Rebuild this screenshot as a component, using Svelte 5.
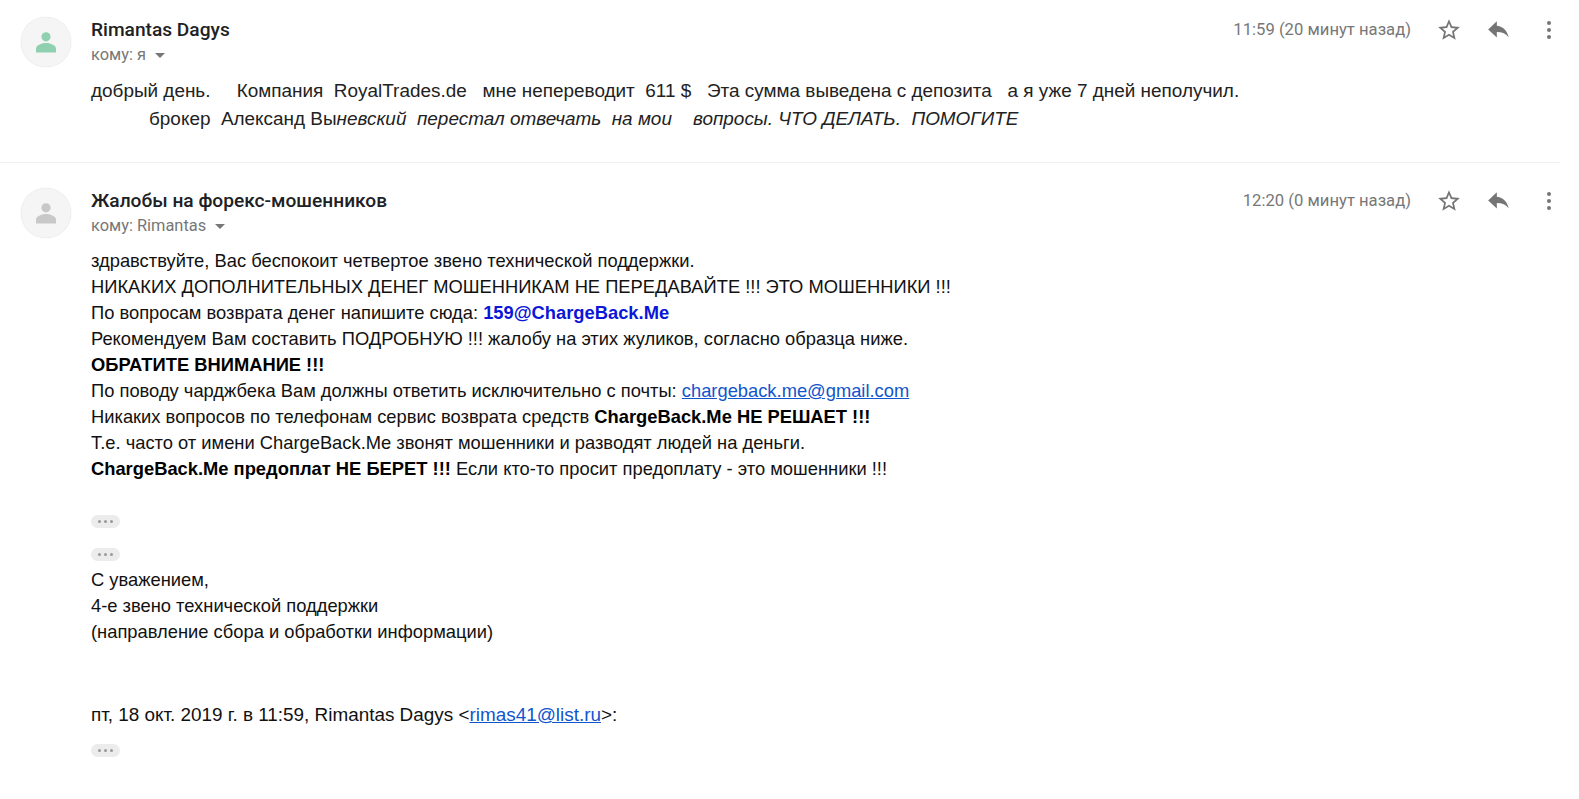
<script>
  let messages = [
    { from: 'Rimantas Dagys', to: 'кому: я', time: '11:59 (20 минут назад)', avatar: '#8fd0b0' },
    { from: 'Жалобы на форекс-мошенников', to: 'кому: Rimantas', time: '12:20 (0 минут назад)', avatar: '#c8c8c8' }
  ];
</script>

{#snippet head(m)}
  <div class="avatar">
    <svg width="24" height="24" viewBox="0 0 24 24" fill={m.avatar}>
      <circle cx="12" cy="6.800" r="4.600" />
      <path d="M2 22.500v-4c0-3.600 6.600-5.500 10-5.500s10 1.900 10 5.500v4z" />
    </svg>
  </div>
  <div class="who">
    <div class="from">{m.from}</div>
    <div class="to">{m.to}<span class="caret"></span></div>
  </div>
  <div class="time">{m.time}</div>
  <div class="icons">
    <svg class="star" width="26" height="26" viewBox="0 0 24 24" fill="#757575">
      <path d="M22 9.240l-7.190-.62L12 2 9.190 8.630 2 9.240l5.460 4.730L5.820 21 12 17.270 18.180 21l-1.630-7.030L22 9.240zM12 15.400l-3.760 2.270 1-4.280-3.320-2.880 4.380-.38L12 6.100l1.710 4.040 4.380.38-3.320 2.880 1 4.280L12 15.400z" />
    </svg>
    <svg class="reply" width="26" height="26" viewBox="0 0 24 24" fill="#757575">
      <path d="M10 9V4l-8 7.500 8 7.500v-5.100c5 0 8.500 1.600 11 5.100-1-5-4-10-11-11z" />
    </svg>
    <svg class="more" width="6" height="20" viewBox="0 0 6 20" fill="#757575">
      <circle cx="3" cy="3" r="2" /><circle cx="3" cy="10" r="2" /><circle cx="3" cy="17" r="2" />
    </svg>
  </div>
{/snippet}

<main>
  <section class="msg first">
    <header>{@render head(messages[0])}</header>
    <div class="body short">
      <div>добрый день.&nbsp; &nbsp; &nbsp;Компания&nbsp; RoyalTrades.de&nbsp; &nbsp;мне непереводит&nbsp; 611 $&nbsp; &nbsp;Эта сумма выведена с депозита&nbsp; &nbsp;а я уже 7 дней неполучил.</div>
      <div class="indent">брокер&nbsp; Александ Вы<i>невский&nbsp; перестал отвечать&nbsp; на мои&nbsp; &nbsp; вопросы. ЧТО ДЕЛАТЬ.&nbsp; ПОМОГИТЕ</i></div>
    </div>
  </section>

  <section class="msg second">
    <header>{@render head(messages[1])}</header>
    <div class="body">
      <div>здравствуйте, Вас беспокоит четвертое звено технической поддержки.</div>
      <div>НИКАКИХ ДОПОЛНИТЕЛЬНЫХ ДЕНЕГ МОШЕННИКАМ НЕ ПЕРЕДАВАЙТЕ !!! ЭТО МОШЕННИКИ !!!</div>
      <div>По вопросам возврата денег напишите сюда: <b class="blue">159@ChargeBack.Me</b></div>
      <div>Рекомендуем Вам составить ПОДРОБНУЮ !!! жалобу на этих жуликов, согласно образца ниже.</div>
      <div><b>ОБРАТИТЕ ВНИМАНИЕ !!!</b></div>
      <div>По поводу чарджбека Вам должны ответить исключительно с почты: <a href="#m">chargeback.me@gmail.com</a></div>
      <div>Никаких вопросов по телефонам сервис возврата средств <b>ChargeBack.Me НЕ РЕШАЕТ !!!</b></div>
      <div>Т.е. часто от имени ChargeBack.Me звонят мошенники и разводят людей на деньги.</div>
      <div><b>ChargeBack.Me предоплат НЕ БЕРЕТ !!!</b> Если кто-то просит предоплату - это мошенники !!!</div>

      <div class="dots gap1"><span></span><span></span><span></span></div>
      <div class="dots gap2"><span></span><span></span><span></span></div>

      <div>С уважением,</div>
      <div>4-е звено технической поддержки</div>
      <div>(направление сбора и обработки информации)</div>

      <div class="quote">пт, 18 окт. 2019 г. в 11:59, Rimantas Dagys &lt;<a href="#m">rimas41@list.ru</a>&gt;:</div>
      <div class="dots gap3"><span></span><span></span><span></span></div>
    </div>
  </section>
</main>

<style>
  :global(body) {
    background: #fff;
    overflow: hidden;
  }

  main {
    width: 1560px;
    height: 799px;
    overflow: hidden;
    font-family: "Liberation Sans", Arial, sans-serif;
    font-size: 18.33px;
    color: #222;
  }

  .msg {
    padding-left: 21px;
  }

  .msg.first {
    padding-top: 17px;
    height: 145px;
    border-bottom: 1px solid #efefef;
  }

  .msg.second {
    padding-top: 25px;
  }

  header {
    display: flex;
    align-items: flex-start;
    height: 50px;
  }

  .avatar {
    width: 50px;
    height: 50px;
    border-radius: 50%;
    background: #f5f5f5;
    box-shadow: 0 0 1px #ccc;
    display: flex;
    align-items: center;
    justify-content: center;
    flex: none;
  }

  .who {
    margin-left: 20px;
    flex: 1;
  }

  .from {
    font-family: Roboto, sans-serif;
    font-weight: 500;
    font-size: 19.15px;
    line-height: 25px;
    color: #202124;
  }

  .to {
    font-family: Roboto, sans-serif;
    font-size: 16.4px;
    line-height: 25px;
    color: #777;
  }

  .caret {
    display: inline-block;
    margin-left: 9px;
    vertical-align: 2px;
    border: 5px solid transparent;
    border-top-color: #777;
    border-bottom: 0;
  }

  .time {
    font-family: Roboto, sans-serif;
    font-size: 16.65px;
    line-height: 24px;
    color: #777;
    margin-top: 1px;
  }

  .icons {
    display: flex;
    align-items: center;
    height: 24px;
    margin-top: 1px;
    margin-left: 25px;
  }

  .reply {
    margin-left: 24px;
  }

  .more {
    margin-left: 34px;
    margin-right: 8px;
  }

  .body {
    margin: 10px 0 0 70px;
    line-height: 26px;
    white-space: nowrap;
  }

  .body.short {
    font-size: 18.93px;
    line-height: 28px;
    margin-top: 10px;
    color: #222;
  }

  .indent {
    padding-left: 58px;
  }

  .second .body {
    color: #111;
  }

  b {
    color: #000;
  }

  b.blue {
    color: #0b16d8;
  }

  a {
    color: #1155cc;
    text-decoration: underline;
  }

  .dots {
    width: 29px;
    height: 13px;
    border-radius: 7px;
    background: #ececec;
    display: flex;
    align-items: center;
    justify-content: center;
    gap: 2.5px;
  }

  .dots span {
    width: 3.5px;
    height: 3.5px;
    border-radius: 50%;
    background: #999;
  }

  .gap1 {
    margin-top: 33px;
  }

  .gap2 {
    margin-top: 20px;
    margin-bottom: 6px;
  }

  .quote {
    margin-top: 57px;
    font-size: 18.9px;
  }

  .gap3 {
    margin-top: 16px;
  }
</style>
